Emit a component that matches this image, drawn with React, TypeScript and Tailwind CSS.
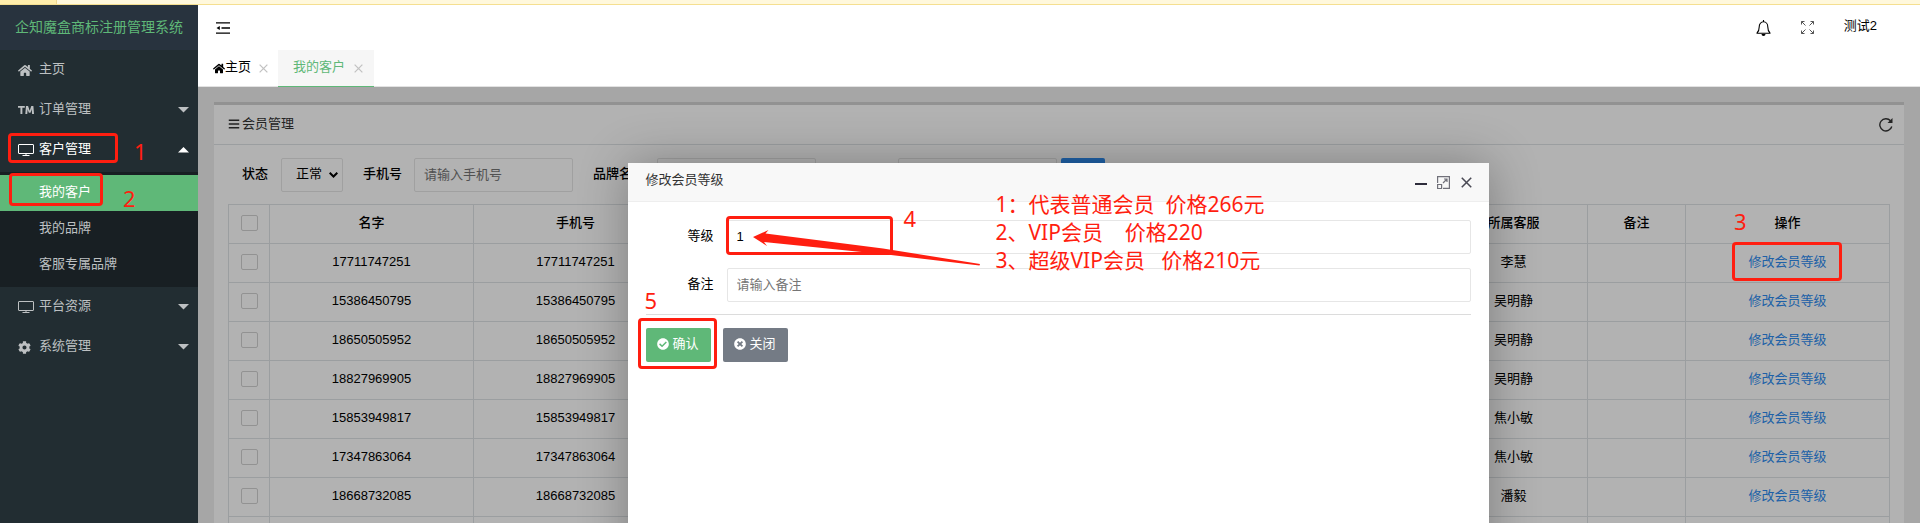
import { useState, type ReactNode } from 'react';
import { FaBars, FaCheckCircle, FaCog, FaHome, FaTimesCircle, FaTrademark } from 'react-icons/fa';

const phones = [
  { phone: '17711747251', staff: '李慧' },
  { phone: '15386450795', staff: '吴明静' },
  { phone: '18650505952', staff: '吴明静' },
  { phone: '18827969905', staff: '吴明静' },
  { phone: '15853949817', staff: '焦小敏' },
  { phone: '17347863064', staff: '焦小敏' },
  { phone: '18668732085', staff: '潘毅' },
  { phone: '13855620417', staff: '潘毅' },
];

const subItems = ['我的客户', '我的品牌', '客服专属品牌'];

const cell = 'border border-[#dee2e6] text-center pb-0.5';
const checkbox = 'block mx-auto w-[17px] h-4 appearance-none border border-[#d2d2d2] rounded-xs bg-white';
const field = 'h-[34px] border border-[#e6e6e6] rounded-xs bg-white px-[9px] pb-0.5 placeholder:text-[#757575] outline-none';

function DesktopIcon() {
  return (
    <svg className="w-4 h-3" viewBox="0 0 16 12" fill="none" stroke="currentColor">
      <rect x="0.5" y="0.5" width="15" height="9" rx="0.5" />
      <path d="M8 10v1M4.5 11.5h7" />
    </svg>
  );
}

function Caret({ up = false }: { up?: boolean }) {
  return (
    <svg className="w-[11px] h-[6px]" viewBox="0 0 11 6" fill="currentColor">
      <path d={up ? 'M0 5.5h11L5.5 0z' : 'M0 0h11L5.5 5.5z'} />
    </svg>
  );
}

function CloseIcon({ className }: { className: string }) {
  return (
    <svg className={className} viewBox="0 0 10 10" fill="none" stroke="currentColor" strokeWidth="1.4">
      <path d="M0.7 0.7l8.6 8.6M9.3 0.7L0.7 9.3" />
    </svg>
  );
}

// Red callout frame drawn over a control
function Mark({ className }: { className: string }) {
  return <span className={`absolute z-20 border-[3px] border-[#ff1e10] rounded-[4px] pointer-events-none ${className}`} />;
}

function Step({ className, children }: { className: string; children: ReactNode }) {
  return (
    <span className={`absolute z-20 text-[22px] leading-6 font-normal text-[#ff1e10] font-['Noto_Sans','Noto_Sans_CJK_SC',sans-serif] pointer-events-none ${className}`}>
      {children}
    </span>
  );
}

function NavItem({ icon, label, open, leaf }: { icon: ReactNode; label: string; open?: boolean; leaf?: boolean }) {
  return (
    <a href="#" className={`flex items-center h-10 pl-[18px] pr-[9px] ${open ? 'text-white' : 'text-[#bdc0c2]'}`}>
      <span className="w-[21px]">{icon}</span>
      <span className="flex-1 pb-0.5">{label}</span>
      {!leaf && <Caret up={open} />}
    </a>
  );
}

function Sidebar() {
  return (
    <aside className="w-[198px] shrink-0 bg-[#222d32]">
      <div className="h-[45px] flex items-center justify-center pb-0.5 bg-[#28333e] text-sm text-[#5fb878] whitespace-nowrap">
        企知魔盒商标注册管理系统
      </div>
      <nav>
        <NavItem icon={<FaHome className="w-[14px] h-[13px]" />} label="主页" leaf />
        <NavItem icon={<FaTrademark className="w-4 h-4" />} label="订单管理" />
        <div className="relative">
          <NavItem icon={<DesktopIcon />} label="客户管理" open />
          <Mark className="left-2 top-[3px] w-[110px] h-[30px]" />
          <Step className="left-[134px] top-[9px]">1</Step>
        </div>
        <ul className="mt-0.5 pt-[3px] pb-1 bg-[#181f23]">
          {subItems.map((item, index) => (
            <li key={item} className="relative">
              <a
                href="#"
                className={`flex items-center h-9 pl-[39px] pb-0.5 ${index === 0 ? 'bg-[#5fb878] text-white' : 'text-[#bdc0c2]'}`}
              >
                {item}
              </a>
              {index === 0 && (
                <>
                  <Mark className="left-[9px] -top-0.5 w-[94px] h-[33px]" />
                  <Step className="left-[123px] top-[11px]">2</Step>
                </>
              )}
            </li>
          ))}
        </ul>
        <NavItem icon={<DesktopIcon />} label="平台资源" />
        <NavItem icon={<FaCog className="w-[13px] h-[13px]" />} label="系统管理" />
      </nav>
    </aside>
  );
}

function TopBar() {
  return (
    <header className="h-[82px] shrink-0 bg-white border-b border-[#e2e2e2] text-black">
      <div className="h-[45px] flex items-center pl-[18px] pr-[43px]">
        <button aria-label="收起菜单">
          <svg className="w-[14px] h-3" viewBox="0 0 14 12" fill="none" stroke="currentColor" strokeWidth="1.3">
            <path d="M0 .8h14M5.500 6h8.500M0 11.200h14" />
            <path d="M0.500 6L3.800 4v4z" fill="currentColor" stroke="none" />
          </svg>
        </button>
        <button aria-label="消息" className="ml-auto">
          <svg className="w-[15px] h-4" viewBox="0 0 15 16" fill="none" stroke="currentColor" strokeWidth="1.1">
            <path d="M0.500 13.200h14M1 13C2.600 11.500 3.200 10 3.200 7C3.200 4 5 1.800 7.500 1.800S11.800 4 11.800 7C11.800 10 12.400 11.500 14 13M7.500 0v2" />
            <path d="M5.500 14h4a2 2 0 0 1-4 0z" fill="currentColor" stroke="none" />
          </svg>
        </button>
        <button aria-label="全屏" className="ml-[30px] text-[#555]">
          <svg className="w-[13px] h-[13px]" viewBox="0 0 13 13" fill="none" stroke="currentColor">
            <path d="M0.500 3.500v-3h3M0.500 0.500l4 4M9.500 0.500h3v3M12.500 0.500l-4 4M0.500 9.500v3h3M0.500 12.500l4-4M9.500 12.500h3v-3M12.500 12.500l-4-4" />
          </svg>
        </button>
        <button className="ml-[30px] pb-1">测试2</button>
      </div>
      <div className="flex h-9">
        <div className="flex items-center w-20 pl-[15px]">
          <FaHome className="w-3 h-[11px] shrink-0" />
          <span className="pb-0.5 whitespace-nowrap">主页</span>
          <CloseIcon className="ml-2 w-[9px] h-[9px] text-[#c2c2c2]" />
        </div>
        <div className="flex items-center h-[37px] w-24 pl-[15px] bg-[#f6f6f6] border-b border-[#5fb878] text-[#5fb878]">
          <span className="pb-0.5">我的客户</span>
          <CloseIcon className="ml-[9px] w-[9px] h-[9px] text-[#c2c2c2]" />
        </div>
      </div>
    </header>
  );
}

function MemberTable() {
  return (
    <table className="w-full table-fixed border-collapse">
      <thead>
        <tr className="h-[39px]">
          <th className={`${cell} w-[41px]`}>
            <input type="checkbox" aria-label="全选" className={checkbox} />
          </th>
          <th className={`${cell} w-[204px] font-medium`}>名字</th>
          <th className={`${cell} w-[204px] font-medium`}>手机号</th>
          <th className={`${cell} font-medium`}>品牌名称</th>
          <th className={`${cell} w-[204px] font-medium`}>等级</th>
          <th className={`${cell} w-[148px] font-medium`}>所属客服</th>
          <th className={`${cell} w-[98px] font-medium`}>备注</th>
          <th className={`${cell} w-[204px] font-medium relative`}>
            操作
            <Step className="left-12 top-1">3</Step>
          </th>
        </tr>
      </thead>
      <tbody>
        {phones.map((row, index) => (
          <tr key={row.phone} className="h-[39px]">
            <td className={cell}>
              <input type="checkbox" aria-label={row.phone} className={checkbox} />
            </td>
            <td className={cell}>{row.phone}</td>
            <td className={cell}>{row.phone}</td>
            <td className={cell} />
            <td className={cell} />
            <td className={cell}>{row.staff}</td>
            <td className={cell} />
            <td className={`${cell} relative`}>
              <a href="#" className="text-[#2d8cf0]">修改会员等级</a>
              {index === 0 && <Mark className="left-[46px] -top-0.5 w-[110px] h-[39px]" />}
            </td>
          </tr>
        ))}
      </tbody>
    </table>
  );
}

function MemberCard() {
  return (
    <section className="bg-white border-t-[3px] border-[#d2d2d2]">
      <div className="flex items-center justify-between h-10 pl-[14px] pr-[11px] border-b border-[#dee2e6] text-[#333]">
        <h2 className="flex items-center gap-0.5 pb-0.5">
          <FaBars className="w-3 h-3" />
          会员管理
        </h2>
        <button aria-label="刷新">
          <svg className="w-[14px] h-[14px]" viewBox="0 0 14 14" fill="none" stroke="currentColor" strokeWidth="1.4">
            <path d="M12.800 8.500A6.100 6.100 0 1 1 11.500 2.800" />
            <path d="M13.500 0v5H8.500z" fill="currentColor" stroke="none" />
          </svg>
        </button>
      </div>
      <form className="flex items-center pt-[13px] pb-3 pl-7 whitespace-nowrap">
        <label htmlFor="state" className="font-medium mr-[13px] pb-0.5">状态</label>
        <div className="relative mr-5">
          <select id="state" className={`${field} w-[62px] pl-[14px] appearance-none`}>
            <option>正常</option>
            <option>禁用</option>
          </select>
          <svg className="absolute right-[5px] top-[14px] w-[9px] h-[6px] pointer-events-none" viewBox="0 0 9 6" fill="none" stroke="black" strokeWidth="2">
            <path d="M0.700 0.700l3.800 3.800L8.300 0.700" />
          </svg>
        </div>
        <label htmlFor="phone" className="font-medium mr-3 pb-0.5">手机号</label>
        <input id="phone" placeholder="请输入手机号" className={`${field} w-[159px] mr-5`} />
        <label htmlFor="brand" className="font-medium mr-3 pb-0.5">品牌名称</label>
        <input id="brand" className={`${field} w-[159px] mr-5`} />
        <label htmlFor="staff" className="font-medium mr-2.5 pb-0.5">所属客服</label>
        <input id="staff" className={`${field} w-[159px] mr-1`} />
        <button type="button" className="h-[34px] w-11 rounded-xs bg-[#2d8cf0] text-white">搜索</button>
      </form>
      <div className="px-[14px] pb-4">
        <MemberTable />
      </div>
    </section>
  );
}

function LevelDialog() {
  const [level, setLevel] = useState('1');

  return (
    <div role="dialog" aria-label="修改会员等级" className="absolute z-10 top-[76px] -bottom-20 left-1/4 -ml-px w-1/2 bg-white rounded-xs shadow-[1px_1px_50px_rgba(0,0,0,0.3)]">
      <div className="flex items-center h-[39px] pl-[18px] pr-[17px] bg-[#f8f8f8] border-b border-[#eee] text-[#333]">
        <h3 className="flex-1 pb-1">修改会员等级</h3>
        <button aria-label="最小化" className="w-3 h-0.5 mt-[3px] bg-[#2e2d3c]" />
        <button aria-label="最大化" className="ml-[10px] text-[#71717a]">
          <svg className="w-[13px] h-[13px]" viewBox="0 0 13 13" fill="none" stroke="currentColor" strokeWidth="1.2">
            <path d="M0.600 7V0.600h11.800v11.800H6M0.600 8.500h4v4h-4zM6 7l4-4M7 3h3v3" />
          </svg>
        </button>
        <button aria-label="关闭窗口" className="ml-[11px] text-[#4a4a55]">
          <CloseIcon className="w-[11px] h-[11px]" />
        </button>
      </div>

      <form className="relative px-[18px] pt-[18px]" onSubmit={(e) => e.preventDefault()}>
        <div className="relative flex items-center mb-[14px]">
          <label htmlFor="level" className="w-[68px] mr-[13px] pb-0.5 text-right">等级</label>
          <input id="level" value={level} onChange={(e) => setLevel(e.target.value)} className={`${field} flex-1`} />
          <Mark className="left-20 -top-1 w-[167px] h-[39px]" />
          <Step className="left-[258px] -top-[14px]">4</Step>
        </div>
        <div className="flex items-center">
          <label htmlFor="remark" className="w-[68px] mr-[13px] pb-0.5 text-right">备注</label>
          <input id="remark" placeholder="请输入备注" className={`${field} flex-1`} />
        </div>
        <hr className="mt-3 border-[#dcdcdc]" />
        <div className="relative flex gap-3 mt-[13px] text-white">
          <button type="submit" className="flex items-center justify-center gap-[3px] w-[65px] h-[34px] pb-0.5 rounded-xs bg-[#5fb878]">
            <FaCheckCircle className="w-3 h-3" />
            确认
          </button>
          <button type="button" className="flex items-center justify-center gap-[3px] w-[65px] h-[34px] pb-0.5 rounded-xs bg-[#747b85]">
            <FaTimesCircle className="w-3 h-3" />
            关闭
          </button>
          <Mark className="-left-2 -top-[10px] w-[79px] h-[51px]" />
          <Step className="-left-px -top-10">5</Step>
        </div>

        {/* Level explanation and its pointer */}
        <svg className="absolute z-20 left-[125px] top-7 w-[228px] h-9 pointer-events-none" viewBox="0 0 228 36" fill="#ff1e10">
          <path d="M0 7L15.500 0L12.500 3.500L130 18.500L227 34L226.500 35.500L138 25L11 12L14 16Z" />
        </svg>
        <div className="absolute z-20 left-[368px] -top-3 text-[21px] leading-7 text-[#ff1e10] font-['Noto_Sans','Noto_Sans_CJK_SC',sans-serif] whitespace-pre pointer-events-none">
          <p>1：代表普通会员{'  '}价格266元</p>
          <p>2、VIP会员{'    '}价格220</p>
          <p>3、超级VIP会员{'   '}价格210元</p>
        </div>
      </form>
    </div>
  );
}

export default function App() {
  return (
    <div className="flex flex-col h-screen overflow-hidden text-[13px] leading-5 text-black font-['Liberation_Sans','Noto_Sans_CJK_SC',sans-serif]">
      <div className="h-[5px] shrink-0 bg-[#fff8dc] border-b border-[#f5df90]">
        <div className="w-[57px] h-1 bg-[#ffeeac] border-r border-[#f0d890]" />
      </div>
      <div className="flex flex-1 min-h-0">
        <Sidebar />
        <div className="flex flex-col flex-1 min-w-0">
          <TopBar />
          <main className="relative flex-1 overflow-hidden bg-[#eee]">
            <div className="relative px-4 pt-[15px]">
              <MemberCard />
            </div>
            <div className="absolute inset-0 bg-black/30" />
            <LevelDialog />
          </main>
        </div>
      </div>
    </div>
  );
}
